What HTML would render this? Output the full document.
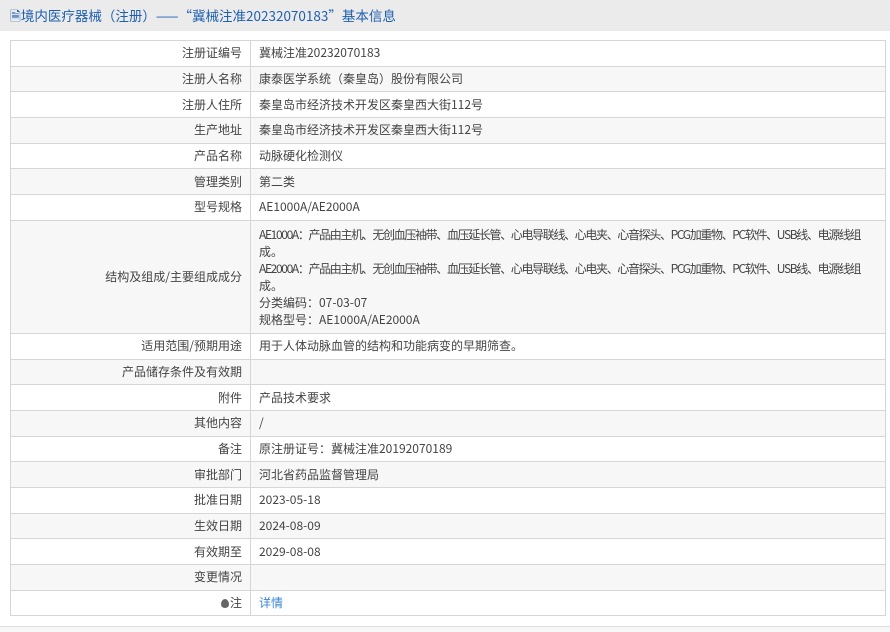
<!DOCTYPE html>
<html><head><meta charset="utf-8"><style>
*{margin:0;padding:0;box-sizing:border-box}
body{width:890px;height:632px;background:#fff;font-family:"Noto Sans CJK SC","Liberation Sans",sans-serif;font-size:12px;color:#444;position:relative;overflow:hidden}
.hd{position:absolute;left:0;top:0;width:890px;height:31px;background:#ebebeb;color:#1f5fb0;font-size:13.5px;line-height:31px;padding-left:10px;white-space:nowrap}
table{position:absolute;left:10px;top:40px;width:876px;border-collapse:collapse;table-layout:fixed}
td{border:1px solid #d6d6d6;height:25.7px;padding:0 8px;vertical-align:middle;line-height:16px;white-space:nowrap;overflow:hidden}
td.l{width:240px;text-align:right}
tr:nth-child(even) td{background:#f7f7f7}
td.big{line-height:17px;padding-top:4px;padding-bottom:4px}
.n{letter-spacing:-1.35px}
a{color:#3a86d6;text-decoration:none}
.ft{position:absolute;left:0;top:626px;width:890px;height:6px;border-top:1px solid #ddd;background:#f7f7f7}
.dot{display:inline-block;width:8px;height:9px;border-radius:50% 50% 50% 50%/60% 60% 40% 40%;background:#666;vertical-align:-1px;margin-right:1px}
</style></head><body>
<div class="hd">🗎境内医疗器械（注册）——“冀械注准20232070183”基本信息</div>
<table>
<tr><td class="l">注册证编号</td><td>冀械注准20232070183</td></tr>
<tr><td class="l">注册人名称</td><td>康泰医学系统（秦皇岛）股份有限公司</td></tr>
<tr><td class="l">注册人住所</td><td>秦皇岛市经济技术开发区秦皇西大街112号</td></tr>
<tr><td class="l">生产地址</td><td>秦皇岛市经济技术开发区秦皇西大街112号</td></tr>
<tr><td class="l">产品名称</td><td>动脉硬化检测仪</td></tr>
<tr><td class="l">管理类别</td><td>第二类</td></tr>
<tr><td class="l">型号规格</td><td>AE1000A/AE2000A</td></tr>
<tr><td class="l">结构及组成/主要组成成分</td><td class="big" style="height:113px"><span class="n">AE1000A：产品由主机、无创血压袖带、血压延长管、心电导联线、心电夹、心音探头、PCG加重物、PC软件、USB线、电源线组</span><br>成。<br><span class="n">AE2000A：产品由主机、无创血压袖带、血压延长管、心电导联线、心电夹、心音探头、PCG加重物、PC软件、USB线、电源线组</span><br>成。<br>分类编码：07-03-07<br>规格型号：AE1000A/AE2000A</td></tr>
<tr><td class="l">适用范围/预期用途</td><td>用于人体动脉血管的结构和功能病变的早期筛查。</td></tr>
<tr><td class="l">产品储存条件及有效期</td><td></td></tr>
<tr><td class="l">附件</td><td>产品技术要求</td></tr>
<tr><td class="l">其他内容</td><td>/</td></tr>
<tr><td class="l">备注</td><td>原注册证号：冀械注准20192070189</td></tr>
<tr><td class="l">审批部门</td><td>河北省药品监督管理局</td></tr>
<tr><td class="l">批准日期</td><td>2023-05-18</td></tr>
<tr><td class="l">生效日期</td><td>2024-08-09</td></tr>
<tr><td class="l">有效期至</td><td>2029-08-08</td></tr>
<tr><td class="l">变更情况</td><td></td></tr>
<tr><td class="l"><span class="dot"></span>注</td><td><a>详情</a></td></tr>
</table>
<div class="ft"></div>
</body></html>
